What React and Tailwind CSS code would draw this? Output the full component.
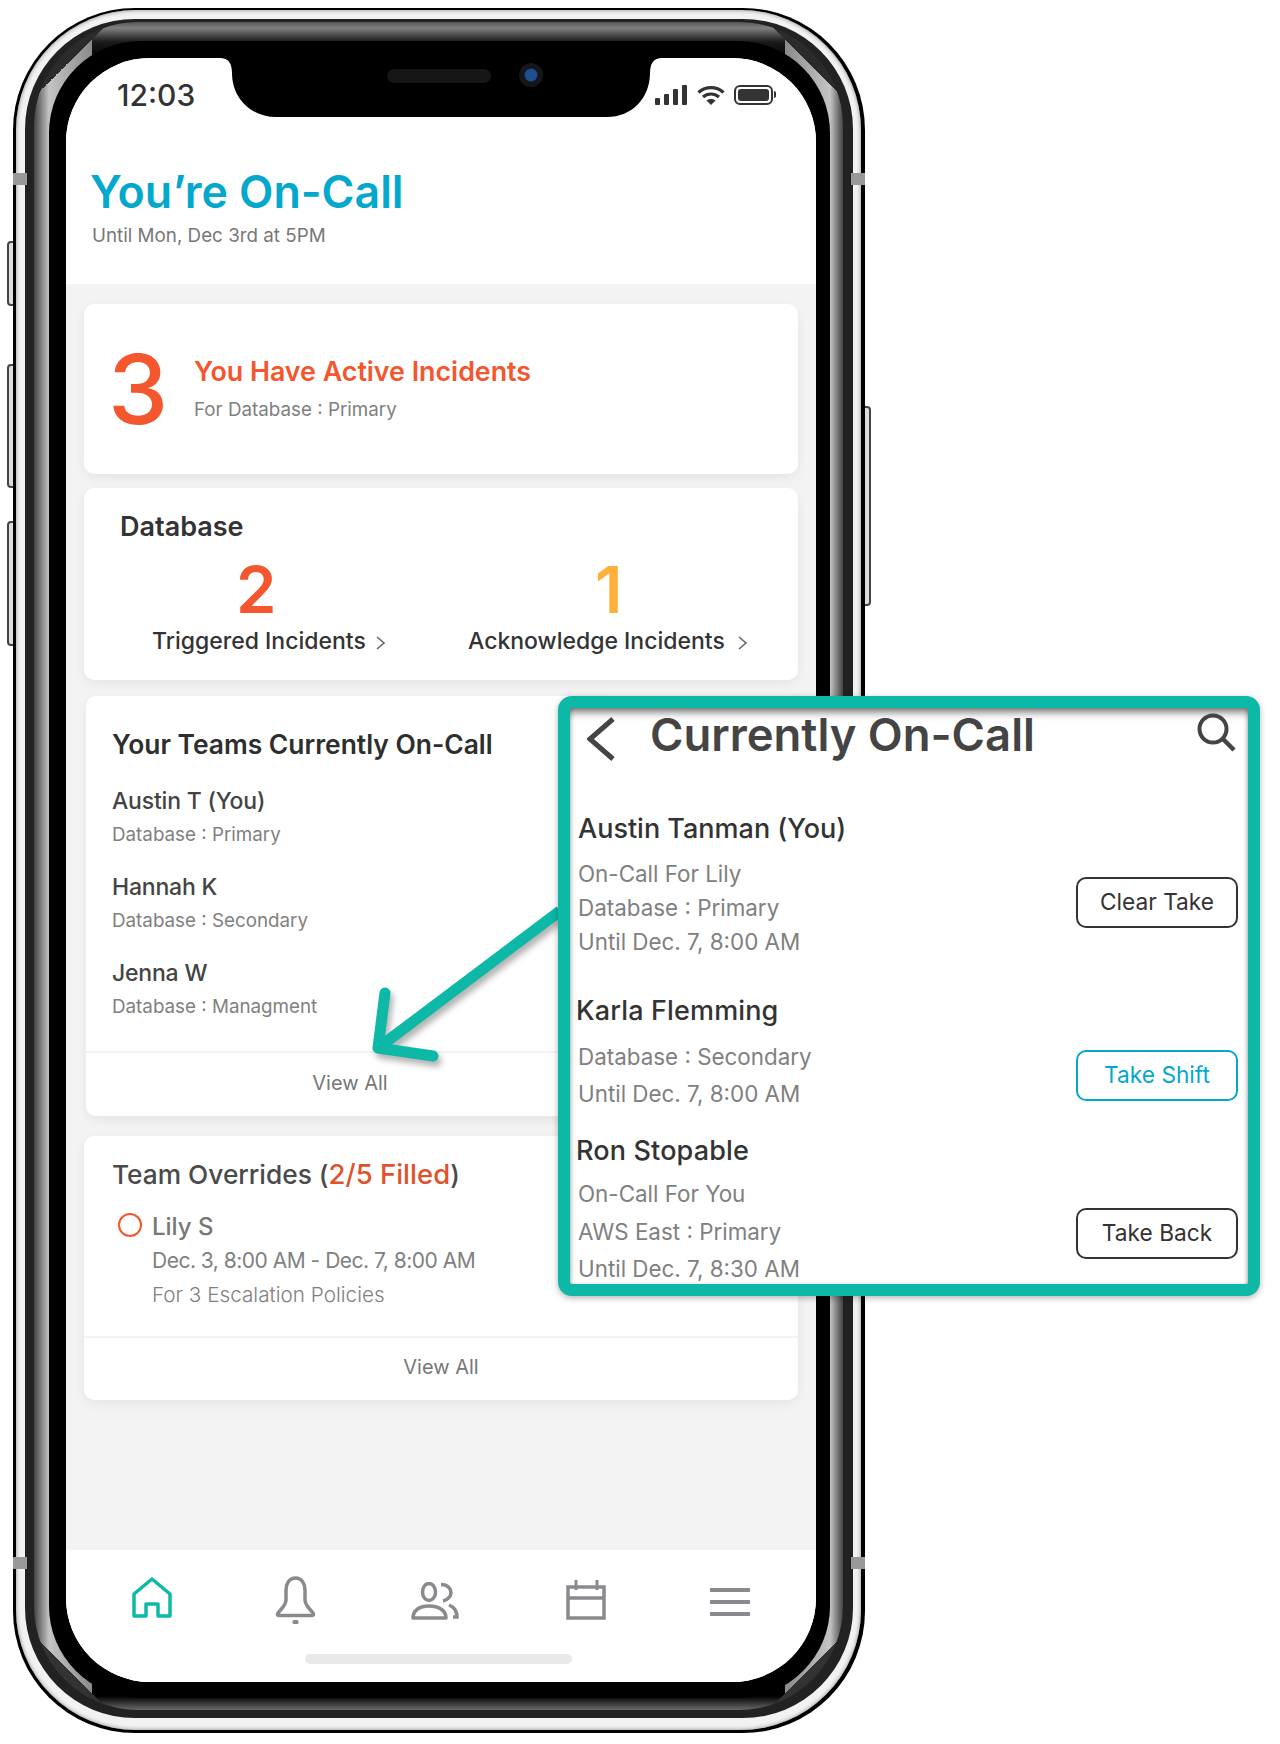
import React from 'react';

const gray = '#8a8a8e';

const SubText = ({ children, className = '' }) => (
  <p className={`text-[18.8px] leading-6 text-[#808080] ${className}`}>{children}</p>
);

const Chevron = ({ className }) => (
  <svg width="11" height="16" viewBox="0 0 11 16" fill="none" className={`mt-[3px] ${className}`}>
    <path d="M2 2l7 6-7 6" stroke="#666" strokeWidth="1.6" />
  </svg>
);

const StatusIcons = () => (
  <div className="flex items-center">
    <div className="flex items-end gap-[4px] h-5">
      <div className="w-[5px] h-[7px] bg-[#333] rounded-[1px]" />
      <div className="w-[5px] h-[11px] bg-[#333] rounded-[1px]" />
      <div className="w-[5px] h-[16px] bg-[#333] rounded-[1px]" />
      <div className="w-[5px] h-5 bg-[#333] rounded-[1px]" />
    </div>
    <svg width="28" height="20" viewBox="0 0 28 20" className="ml-[10px]" fill="none">
      <path d="M1.5 7.5C8.5 1 19.5 1 26.5 7.5" stroke="#333" strokeWidth="3.2" />
      <path d="M6 12C10.5 8 17.5 8 22 12" stroke="#333" strokeWidth="3.2" />
      <path d="M14 20l-4.5-4.5c2.5-2 6.5-2 9 0z" fill="#333" />
    </svg>
    <div className="flex items-center ml-[9px]">
      <div className="w-[39px] h-[20px] border-2 border-[#333] rounded-[6px] p-[2px]">
        <div className="w-full h-full bg-[#333] rounded-[3px]" />
      </div>
      <div className="w-[2px] h-[7px] bg-[#333] rounded-r-full ml-[1px]" />
    </div>
  </div>
);

const Notch = () => (
  <svg width="750" height="60" viewBox="0 0 750 60" className="absolute left-0 top-0">
    <path d="M154 0Q166 0 166 15C166 40 185 59 210 59H541C566 59 584 40 584 15Q584 0 596 0Z" fill="#000" />
    <rect x="321" y="11" width="104" height="14" rx="7" fill="#161616" />
    <circle cx="465" cy="17" r="12" fill="#14161a" />
    <circle cx="465" cy="17" r="6.5" fill="#1f4f8f" />
  </svg>
);

const OnCallPerson = ({ name, detail }) => (
  <div>
    <p className="text-[23px] leading-7 font-medium tracking-[-0.2px] text-[#444]">{name}</p>
    <SubText className="mt-2">{detail}</SubText>
  </div>
);

const NavBar = () => (
  <div className="h-[132px] bg-white">
    <div className="flex items-start pl-[66px]">
      <svg width="40" height="42" viewBox="0 0 40 42" fill="none" className="mt-[27px]">
        <path d="M2 39V17L20 2L38 17V39H26V27H14V39Z" stroke="#0db8a7" strokeWidth="3.5" strokeLinejoin="round" />
      </svg>
      <svg width="41" height="48" viewBox="0 0 41 48" fill="none" className="ml-[103px] mt-[26px]">
        <path d="M20.5 2C14 2 11 8 11 14V24C11 29 7 32 3 37Q1.5 39.5 4 39.5H37Q39.5 39.5 38 37C34 32 30 29 30 24V14C30 8 27 2 20.5 2Z" stroke={gray} strokeWidth="3.5" />
        <rect x="17.5" y="44" width="6" height="4" rx="1.5" fill={gray} />
      </svg>
      <svg width="48" height="38" viewBox="0 0 48 38" fill="none" className="ml-[95px] mt-[32px]">
        <ellipse cx="18" cy="10" rx="6.5" ry="8.5" stroke={gray} strokeWidth="3.5" />
        <path d="M2 36C2 28 9 24 18 24C27 24 35 28 35 36Z" stroke={gray} strokeWidth="3.5" strokeLinejoin="round" />
        <path d="M30 2.5C37 2.5 40 7 40 10.5C40 14 37 18 32 19" stroke={gray} strokeWidth="3.5" />
        <path d="M38 23C43 25 46 29 46 35H42" stroke={gray} strokeWidth="3.5" />
      </svg>
      <svg width="40" height="40" viewBox="0 0 40 40" fill="none" className="ml-[107px] mt-[30px]">
        <path d="M2 38V7H38V38Z" stroke={gray} strokeWidth="3.5" />
        <path d="M2 18H38" stroke={gray} strokeWidth="3.5" />
        <path d="M10 0V10M31 0V10" stroke={gray} strokeWidth="3" />
      </svg>
      <div className="ml-[104px] mt-[38px] flex flex-col gap-2 w-10">
        <div className="h-1 bg-[#8a8a8e]" />
        <div className="h-1 bg-[#8a8a8e]" />
        <div className="h-1 bg-[#8a8a8e]" />
      </div>
    </div>
    <div className="ml-[239px] mt-[30px] w-[267px] h-[10px] rounded-full bg-[#e9e9e9]" />
  </div>
);

const Screen = () => (
  <div className="relative w-[750px] h-[1624px] bg-white rounded-[84px] overflow-hidden flex flex-col">
    <Notch />
    <div className="h-[226px] bg-white">
      <div className="flex items-center justify-between pl-[51px] pr-[40px] pt-[13px] h-[60px]">
        <span className="text-[30px] leading-8 font-medium text-[#333]">12:03</span>
        <StatusIcons />
      </div>
      <h1 className="ml-[24px] mt-[48px] text-[44.7px] leading-[52px] font-semibold text-[#04a8cd]">You’re On-Call</h1>
      <p className="ml-[26px] mt-[6px] text-[18.8px] leading-6 text-[#777]">Until Mon, Dec 3rd at 5PM</p>
    </div>

    <div className="flex-1 bg-[#f3f3f3] pt-5">
      <div className="ml-[18px] w-[714px] h-[170px] bg-white rounded-[10px] shadow-[0_4px_12px_rgba(0,0,0,0.06)] flex items-center pl-6">
        <div className="w-[86px] text-[96px] leading-[100px] font-medium text-[#f4562d]">3</div>
        <div>
          <p className="text-[26.8px] leading-[30px] font-semibold text-[#f4562d]">You Have Active Incidents</p>
          <SubText className="mt-3">For Database : Primary</SubText>
        </div>
      </div>

      <div className="ml-[18px] mt-[14px] w-[714px] h-[192px] bg-white rounded-[10px] shadow-[0_4px_12px_rgba(0,0,0,0.06)] pt-[23px]">
        <p className="ml-9 text-[27px] leading-8 font-semibold text-[#333]">Database</p>
        <div className="flex ml-[68px] mt-[17px]">
          <div className="w-[316px]">
            <p className="pl-[84px] text-[65px] leading-[60px] font-semibold text-[#f4562d]">2</p>
            <div className="flex items-center mt-[6px]">
              <span className="text-[23px] leading-[30px] font-medium text-[#333]">Triggered Incidents</span>
              <Chevron className="ml-[9px]" />
            </div>
          </div>
          <div>
            <p className="pl-[127px] text-[65px] leading-[60px] font-semibold text-[#ffb03b]">1</p>
            <div className="flex items-center mt-[6px]">
              <span className="text-[23px] leading-[30px] font-medium text-[#333]">Acknowledge Incidents</span>
              <Chevron className="ml-3" />
            </div>
          </div>
        </div>
      </div>

      <div className="ml-5 mt-4 w-[528px] h-[420px] bg-white rounded-[10px] shadow-[0_4px_12px_rgba(0,0,0,0.06)] flex flex-col">
        <div className="flex-1 pt-8 pl-[26px]">
          <p className="text-[26.4px] leading-8 font-semibold text-[#2e2e2e]">Your Teams Currently On-Call</p>
          <div className="flex flex-col gap-[26px] mt-[27px]">
            <OnCallPerson name="Austin T (You)" detail="Database : Primary" />
            <OnCallPerson name="Hannah K" detail="Database : Secondary" />
            <OnCallPerson name="Jenna W" detail="Database : Managment" />
          </div>
        </div>
        <div className="h-[65px] pb-1 border-t-2 border-[#f3f3f3] flex items-center justify-center text-[20px] text-[#777]">View All</div>
      </div>

      <div className="ml-[18px] mt-5 w-[714px] h-[264px] bg-white rounded-[10px] shadow-[0_4px_12px_rgba(0,0,0,0.06)] flex flex-col">
        <div className="flex-1 pt-[22px] pl-[28px]">
          <p className="text-[26.3px] leading-8 font-medium text-[#4a4a4a]">
            Team Overrides (<span className="text-[27.5px] font-medium text-[#e0522b]">2/5 Filled</span>)
          </p>
          <div className="flex mt-[22px]">
            <div className="w-6 h-6 rounded-full border-2 border-[#f4562d] ml-[6px] mr-[10px]" />
            <div>
              <p className="text-[24px] leading-7 font-medium text-[#777]">Lily S</p>
              <p className="mt-[6px] text-[21px] leading-7 tracking-[-0.5px] text-[#808080]">Dec. 3, 8:00 AM - Dec. 7, 8:00 AM</p>
              <p className="mt-[6px] text-[20.7px] leading-7 font-light text-[#808080]">For 3 Escalation Policies</p>
            </div>
          </div>
        </div>
        <div className="h-16 pb-[5px] border-t-2 border-[#f3f3f3] flex items-center justify-center text-[20px] text-[#777]">View All</div>
      </div>
    </div>

    <NavBar />
  </div>
);

const Phone = () => (
  <div className="relative ml-[13px] mt-[7px] w-[852px]">
    <div className="absolute left-[-6px] top-[233px] w-2 h-[65px] rounded-l-[4px] border-2 border-[#444] bg-[#ddd]" />
    <div className="absolute left-[-6px] top-[356px] w-2 h-[124px] rounded-l-[4px] border-2 border-[#444] bg-[#ddd]" />
    <div className="absolute left-[-6px] top-[513px] w-2 h-[125px] rounded-l-[4px] border-2 border-[#444] bg-[#ddd]" />
    <div className="absolute right-[-6px] top-[398px] w-2 h-[200px] rounded-r-[4px] border-2 border-[#444] bg-[#ddd]" />

    <div className="relative rounded-[122px] bg-black pl-[3px] pr-[4px] pt-[2px] pb-[3px]">
      <div className="rounded-[120px] bg-[#f2f2f2] shadow-[inset_0_0_4px_#888] pl-[9px] pr-[8px] pt-[9px] pb-[12px]">
        <div className="rounded-[110px] bg-[#222] pl-[9px] pr-[10px] pt-[3px] pb-[8px]">
          <div className="rounded-[104px] pl-[15px] pr-[13px] pt-[19px] pb-[12px] [background:linear-gradient(135deg,#2b2b2b_50%,transparent_50%)_left_top/75px_75px_no-repeat,linear-gradient(225deg,#2b2b2b_50%,transparent_50%)_right_top/75px_75px_no-repeat,linear-gradient(45deg,#333_50%,transparent_50%)_left_bottom/75px_75px_no-repeat,linear-gradient(315deg,#333_50%,transparent_50%)_right_bottom/75px_75px_no-repeat,linear-gradient(90deg,#444_0,#c4c4c4_15px,#8a8a8a_58px,transparent_58px,transparent_calc(100%-58px),#8a8a8a_calc(100%-58px),#c4c4c4_calc(100%-13px),#444_100%),linear-gradient(180deg,#555_0,#808080_6px,#444_14px,#1a1a1a_20px,#000_40px,#000_calc(100%-14px),#6a6a6a_100%)]">
            <div className="rounded-[92px] bg-black pl-[17px] pr-[14px] pt-[17px] pb-[16px]">
              <Screen />
            </div>
          </div>
        </div>
      </div>
    </div>

    <div className="absolute left-0 top-[165px] w-[14px] h-3 bg-[#999]" />
    <div className="absolute right-0 top-[165px] w-[14px] h-3 bg-[#999]" />
    <div className="absolute left-0 top-[1549px] w-[14px] h-3 bg-[#999]" />
    <div className="absolute right-0 top-[1549px] w-[14px] h-3 bg-[#999]" />
  </div>
);

const Arrow = () => (
  <svg
    width="210"
    height="170"
    viewBox="0 0 210 170"
    fill="none"
    className="absolute left-[360px] top-[900px] drop-shadow-[3px_5px_3px_rgba(0,0,0,0.3)]"
  >
    <path d="M200 11L18 148" stroke="#0db8a7" strokeWidth="11" />
    <path d="M25 93L18 148L73 156" stroke="#0db8a7" strokeWidth="11" strokeLinecap="round" strokeLinejoin="round" />
  </svg>
);

const ActionButton = ({ children, color = 'border-[#333] text-[#333]', top }) => (
  <button className={`w-[162px] h-[51px] border-2 rounded-[10px] text-[22.7px] ${color} ${top}`}>{children}</button>
);

const Overlay = () => (
  <div className="absolute left-[558px] top-[696px] w-[702px] h-[600px] border-12 border-[#0db8a7] rounded-[14px] bg-white overflow-hidden shadow-[0_2px_6px_rgba(0,0,0,0.3)]">
    <div className="relative h-full shadow-[inset_0_10px_8px_-6px_rgba(0,0,0,0.55),inset_3px_0_4px_-2px_rgba(0,0,0,0.3),inset_-3px_0_4px_-2px_rgba(0,0,0,0.3)]">
      <div className="flex items-start h-[106px]">
        <svg width="30" height="46" viewBox="0 0 30 46" fill="none" className="ml-[17px] mt-[8px]">
          <path d="M26 3L3 23L26 43" stroke="#444" strokeWidth="5" />
        </svg>
        <h2 className="ml-[33px] mt-[2px] text-[45.4px] leading-[50px] font-semibold text-[#444]">Currently On-Call</h2>
        <svg width="40" height="40" viewBox="0 0 40 40" fill="none" className="ml-auto mr-[12px] mt-[4px]">
          <circle cx="17" cy="17" r="13.5" stroke="#444" strokeWidth="4" />
          <path d="M27 27L38 38" stroke="#444" strokeWidth="4.5" />
        </svg>
      </div>

      <div className="flex justify-between pl-2 pr-[10px]">
        <div>
          <p className="text-[27px] leading-[30px] font-medium text-[#333]">Austin Tanman (You)</p>
          <div className="mt-[13px] text-[22.4px] leading-[34px] text-[#808080]">
            <p>On-Call For Lily</p>
            <p>Database : Primary</p>
            <p>Until Dec. 7, 8:00 AM</p>
          </div>
        </div>
        <ActionButton top="mt-[63px]">Clear Take</ActionButton>
      </div>

      <div className="flex justify-between pl-2 pr-[10px] mt-[37px]">
        <div>
          <p className="-ml-[2px] text-[27px] leading-[30px] font-medium tracking-[0.15px] text-[#333]">Karla Flemming</p>
          <div className="mt-3 text-[22.4px] leading-[37px] text-[#808080]">
            <p>Database : Secondary</p>
            <p>Until Dec. 7, 8:00 AM</p>
          </div>
        </div>
        <ActionButton top="mt-[54px]" color="border-[#04a8cd] text-[#04a8cd]">Take Shift</ActionButton>
      </div>

      <div className="flex justify-between pl-2 pr-[10px] mt-6">
        <div>
          <p className="-ml-[2px] text-[27px] leading-[30px] font-medium tracking-[0.15px] text-[#333]">Ron Stopable</p>
          <div className="mt-[9px] text-[22.4px] leading-[37.7px] text-[#808080]">
            <p>On-Call For You</p>
            <p>AWS East : Primary</p>
            <p>Until Dec. 7, 8:30 AM</p>
          </div>
        </div>
        <ActionButton top="mt-[72px]">Take Back</ActionButton>
      </div>
    </div>
  </div>
);

export default function App() {
  return (
    <div className="relative w-[1280px] h-[1744px] bg-white overflow-hidden pt-px font-[family-name:Inter,sans-serif]">
      <Phone />
      <Arrow />
      <Overlay />
    </div>
  );
}
